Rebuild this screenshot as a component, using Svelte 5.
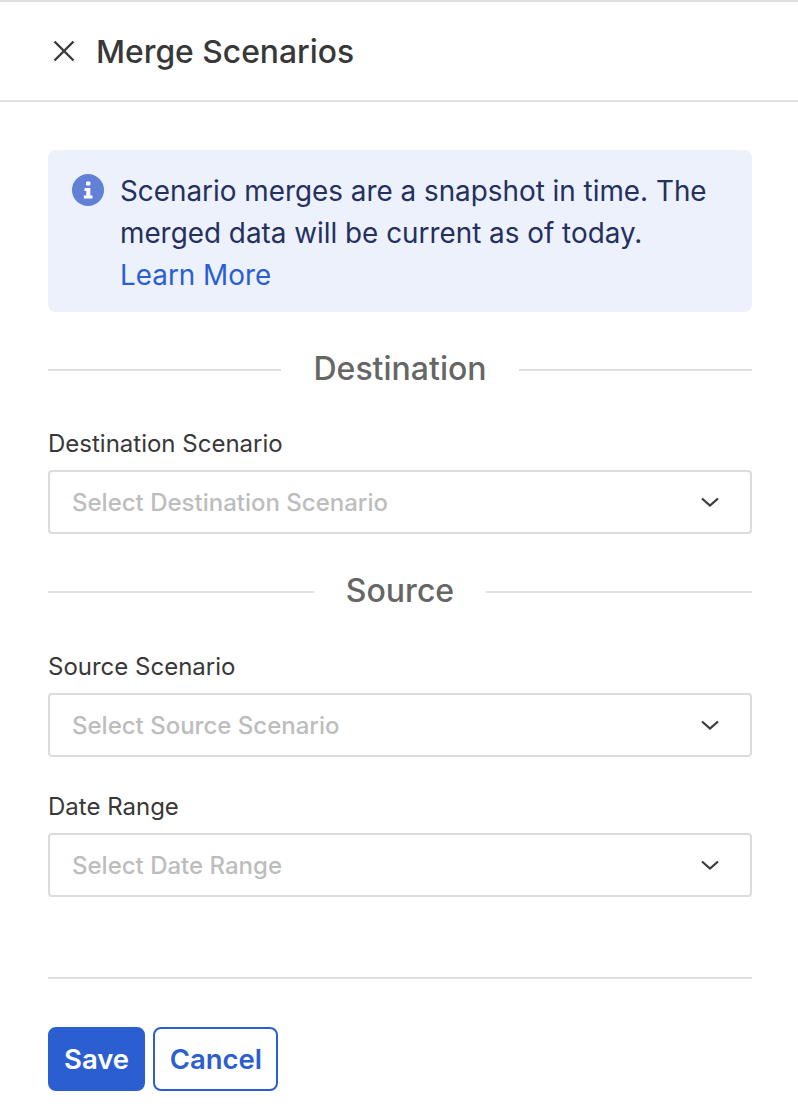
<script>
  const merge = {
    destination: { label: "Destination Scenario", placeholder: "Select Destination Scenario" },
    source: { label: "Source Scenario", placeholder: "Select Source Scenario" },
    range: { label: "Date Range", placeholder: "Select Date Range" },
  };
</script>

{#snippet select(field)}
  <div class="field">
    <span class="label">{field.label}</span>
    <div class="select">
      <span>{field.placeholder}</span>
      <svg width="20" height="20" viewBox="0 0 20 20" fill="none" stroke="#3a3a3a" stroke-width="2.2">
        <path d="M2 6.5 10 13.5 18 6.5" />
      </svg>
    </div>
  </div>
{/snippet}

<div class="panel">
  <header>
    <svg width="24" height="24" viewBox="0 0 24 24" fill="none" stroke="#3a3a3a" stroke-width="2.4">
      <path d="M2.5 2.5 21.5 21.5M21.5 2.5 2.5 21.5" />
    </svg>
    <h1>Merge Scenarios</h1>
  </header>

  <main>
    <div class="alert">
      <svg class="info" width="32" height="32" viewBox="0 0 32 32">
        <circle cx="16" cy="16" r="16" fill="#6180d6" />
        <rect x="14" y="7.5" width="4.4" height="4" rx="1.2" fill="#fff" />
        <path d="M12.5 14h5.8v7.4h2.2v3.1h-8.6v-3.1h2.4v-4.3h-1.8z" fill="#fff" />
      </svg>
      <p>
        Scenario merges are a snapshot in time. The merged data will be current as of today.
        <a href="#learn">Learn More</a>
      </p>
    </div>

    <div class="divider"><span>Destination</span></div>
    {@render select(merge.destination)}

    <div class="divider"><span>Source</span></div>
    <div class="lower">{@render select(merge.source)}</div>
    {@render select(merge.range)}
  </main>

  <footer>
    <button class="save">Save</button>
    <button class="cancel">Cancel</button>
  </footer>
</div>

<style>
  :global(body) {
    margin: 0;
    background: #fff;
  }
  .panel {
    width: 798px;
    height: 1118px;
    box-sizing: border-box;
    border-top: 2px solid #dedede;
    font-family: Inter, "Liberation Sans", sans-serif;
    color: #333;
  }
  header {
    height: 98px;
    display: flex;
    align-items: center;
    gap: 20px;
    padding-left: 52px;
    border-bottom: 2px solid #e0e0e0;
  }
  h1 {
    margin: 0;
    font-size: 31.8px;
    font-weight: 500;
    color: #383838;
  }
  main {
    padding: 48px 46px 0 48px;
  }
  .alert {
    display: flex;
    gap: 16px;
    padding: 20px 24px;
    height: 162px;
    box-sizing: border-box;
    background: #edf1fc;
    border-radius: 8px;
  }
  .info {
    flex: none;
    margin-top: 4px;
  }
  .alert p {
    margin: 0;
    font-size: 27.85px;
    line-height: 42px;
    color: #24305e;
  }
  .alert a {
    display: block;
    color: #2b5fd1;
    text-decoration: none;
  }
  .divider {
    display: flex;
    align-items: center;
    gap: 32px;
    height: 44px;
    margin-top: 36px;
    font-size: 32px;
    font-weight: 500;
    color: #666;
  }
  .divider span {
    padding-bottom: 4px;
  }
  .divider::before,
  .divider::after {
    content: "";
    flex: 1;
    height: 2px;
    background: #e0e0e0;
  }
  .field {
    margin-top: 34px;
  }
  .divider + .field {
    margin-top: 36px;
  }
  .lower {
    padding-top: 37px;
  }
  .lower .field {
    margin-top: 0;
  }
  .label {
    display: block;
    font-size: 24px;
    line-height: 32px;
    color: #383838;
  }
  .select {
    display: flex;
    align-items: center;
    justify-content: space-between;
    height: 64px;
    box-sizing: border-box;
    margin-top: 10px;
    padding: 0 30px 0 22px;
    border: 2px solid #dcdcdc;
    border-radius: 4px;
    font-size: 24px;
    font-weight: 500;
    color: #bdbdbd;
  }
  footer {
    margin: 80px 46px 0 48px;
    padding-top: 48px;
    border-top: 2px solid #e0e0e0;
    display: flex;
    gap: 8px;
  }
  button {
    height: 64px;
    box-sizing: border-box;
    padding: 0 14px;
    border-radius: 8px;
    font: 600 27.5px Inter, "Liberation Sans", sans-serif;
  }
  .save {
    background: #2b5fd1;
    border: 2px solid #2b5fd1;
    color: #fff;
  }
  .cancel {
    background: #fff;
    border: 2px solid #2b5fd1;
    color: #2b5fd1;
    padding: 0 14.5px;
  }
</style>
